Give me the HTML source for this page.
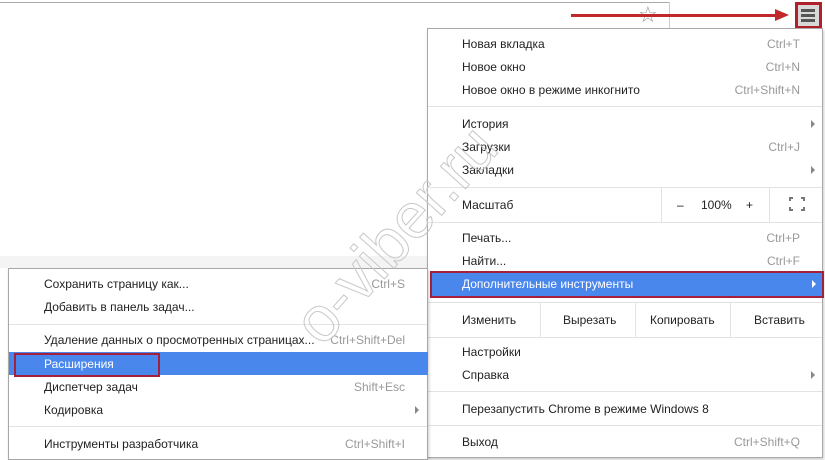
<!DOCTYPE html>
<html><head><meta charset="utf-8"><style>
*{margin:0;padding:0;box-sizing:border-box}
body{width:825px;height:457px;overflow:hidden;background:#fff;position:relative;font-family:"Liberation Sans","DejaVu Sans",sans-serif;font-size:12px;color:#222}
.a{position:absolute;white-space:nowrap;line-height:14px}
.k{color:#999;text-align:right}
.sep{position:absolute;height:1px;background:#e3e3e3}
.menu{position:absolute;background:#fff;border:1px solid #a8a8a8;box-shadow:1px 2px 3px rgba(0,0,0,.2)}
.tri{position:absolute;width:0;height:0;border-top:4px solid transparent;border-bottom:4px solid transparent;border-left:4px solid #888}
</style></head><body>
<div style="position:absolute;left:0;top:2px;width:670px;height:1px;background:#aaa"></div>
<div style="position:absolute;left:669px;top:2px;width:1px;height:27px;background:#ccc"></div>
<div style="position:absolute;left:0;top:256px;width:430px;height:12px;background:#f4f4f4"></div>
<div class="a" style="left:638px;top:4px;font-size:22px;line-height:22px;color:#999">☆</div>
<div style="position:absolute;left:571px;top:14px;width:210px;height:3px;background:#c0282c"></div>
<div style="position:absolute;left:775px;top:9px;width:0;height:0;border-top:6px solid transparent;border-bottom:6px solid transparent;border-left:14px solid #c0282c"></div>
<div style="position:absolute;left:795px;top:2px;width:27px;height:27px;border:3px solid #b0202a;background:#d8d8d8"></div>
<div style="position:absolute;left:801px;top:9px;width:14px;height:3px;background:#555;box-shadow:0 5px 0 #555,0 10px 0 #555"></div>

<div class="menu" style="left:427px;top:28px;width:396px;height:430px"></div>
<div class="a" style="left:462px;top:37px">Новая вкладка</div><div class="a k" style="right:25px;top:37px">Ctrl+T</div>
<div class="a" style="left:462px;top:60px">Новое окно</div><div class="a k" style="right:25px;top:60px">Ctrl+N</div>
<div class="a" style="left:462px;top:83px">Новое окно в режиме инкогнито</div><div class="a k" style="right:25px;top:83px">Ctrl+Shift+N</div>
<div class="sep" style="left:428px;top:106px;width:394px"></div>
<div class="a" style="left:462px;top:117px">История</div><div class="tri" style="left:811px;top:120px"></div>
<div class="a" style="left:462px;top:140px">Загрузки</div><div class="a k" style="right:25px;top:140px">Ctrl+J</div>
<div class="a" style="left:462px;top:163px">Закладки</div><div class="tri" style="left:811px;top:166px"></div>
<div class="sep" style="left:428px;top:187px;width:394px"></div>
<div class="a" style="left:462px;top:198px">Масштаб</div>
<div style="position:absolute;left:661px;top:188px;width:1px;height:34px;background:#e3e3e3"></div>
<div style="position:absolute;left:769px;top:188px;width:1px;height:34px;background:#e3e3e3"></div>
<div class="a" style="left:677px;top:198px">–</div><div class="a" style="left:701px;top:198px">100%</div><div class="a" style="left:746px;top:198px">+</div>
<div style="position:absolute;left:789px;top:197px;width:16px;height:14px;border:2px solid #777"></div>
<div style="position:absolute;left:793px;top:196px;width:8px;height:16px;background:#fff"></div>
<div style="position:absolute;left:788px;top:201px;width:18px;height:6px;background:#fff"></div>
<div class="sep" style="left:428px;top:222px;width:394px"></div>
<div class="a" style="left:462px;top:231px">Печать...</div><div class="a k" style="right:25px;top:231px">Ctrl+P</div>
<div class="a" style="left:462px;top:254px">Найти...</div><div class="a k" style="right:25px;top:254px">Ctrl+F</div>
<div style="position:absolute;left:430px;top:271px;width:394px;height:27px;background:#4a87ed;border:2px solid #a5203a"></div>
<div class="a" style="left:462px;top:277px;color:#fff">Дополнительные инструменты</div>
<div class="tri" style="left:812px;top:280px;border-left-color:#fff"></div>
<div class="sep" style="left:428px;top:302px;width:394px"></div>
<div class="a" style="left:462px;top:313px">Изменить</div>
<div style="position:absolute;left:540px;top:302px;width:1px;height:35px;background:#e3e3e3"></div>
<div class="a" style="left:563px;top:313px">Вырезать</div>
<div style="position:absolute;left:635px;top:302px;width:1px;height:35px;background:#e3e3e3"></div>
<div class="a" style="left:650px;top:313px">Копировать</div>
<div style="position:absolute;left:730px;top:302px;width:1px;height:35px;background:#e3e3e3"></div>
<div class="a" style="left:754px;top:313px">Вставить</div>
<div class="sep" style="left:428px;top:337px;width:394px"></div>
<div class="a" style="left:462px;top:345px">Настройки</div>
<div class="a" style="left:462px;top:368px">Справка</div><div class="tri" style="left:811px;top:371px"></div>
<div class="sep" style="left:428px;top:391px;width:394px"></div>
<div class="a" style="left:462px;top:402px">Перезапустить Chrome в режиме Windows 8</div>
<div class="sep" style="left:428px;top:425px;width:394px"></div>
<div class="a" style="left:462px;top:435px">Выход</div><div class="a k" style="right:25px;top:435px">Ctrl+Shift+Q</div>

<div class="menu" style="left:8px;top:268px;width:420px;height:192px"></div>
<div class="a" style="left:44px;top:277px">Сохранить страницу как...</div><div class="a k" style="left:330px;width:75px;top:277px">Ctrl+S</div>
<div class="a" style="left:44px;top:300px">Добавить в панель задач...</div>
<div class="sep" style="left:9px;top:324px;width:418px"></div>
<div class="a" style="left:44px;top:333px">Удаление данных о просмотренных страницах...</div><div class="a k" style="left:320px;width:85px;top:333px">Ctrl+Shift+Del</div>
<div style="position:absolute;left:9px;top:352px;width:419px;height:23px;background:#4a87ed"></div>
<div style="position:absolute;left:14px;top:353px;width:146px;height:24px;border:2px solid #a5203a"></div>
<div class="a" style="left:44px;top:357px;color:#fff">Расширения</div>
<div class="a" style="left:44px;top:380px">Диспетчер задач</div><div class="a k" style="left:330px;width:75px;top:380px">Shift+Esc</div>
<div class="a" style="left:44px;top:403px">Кодировка</div><div class="tri" style="left:415px;top:406px"></div>
<div class="sep" style="left:9px;top:426px;width:418px"></div>
<div class="a" style="left:44px;top:437px">Инструменты разработчика</div><div class="a k" style="left:320px;width:85px;top:437px">Ctrl+Shift+I</div>

<div class="a" style="left:282px;top:312px;font-size:64px;line-height:64px;color:transparent;-webkit-text-stroke:1px #c8c8c8;transform:rotate(-48deg);transform-origin:left top;z-index:5">o-viber.ru</div>
</body></html>
